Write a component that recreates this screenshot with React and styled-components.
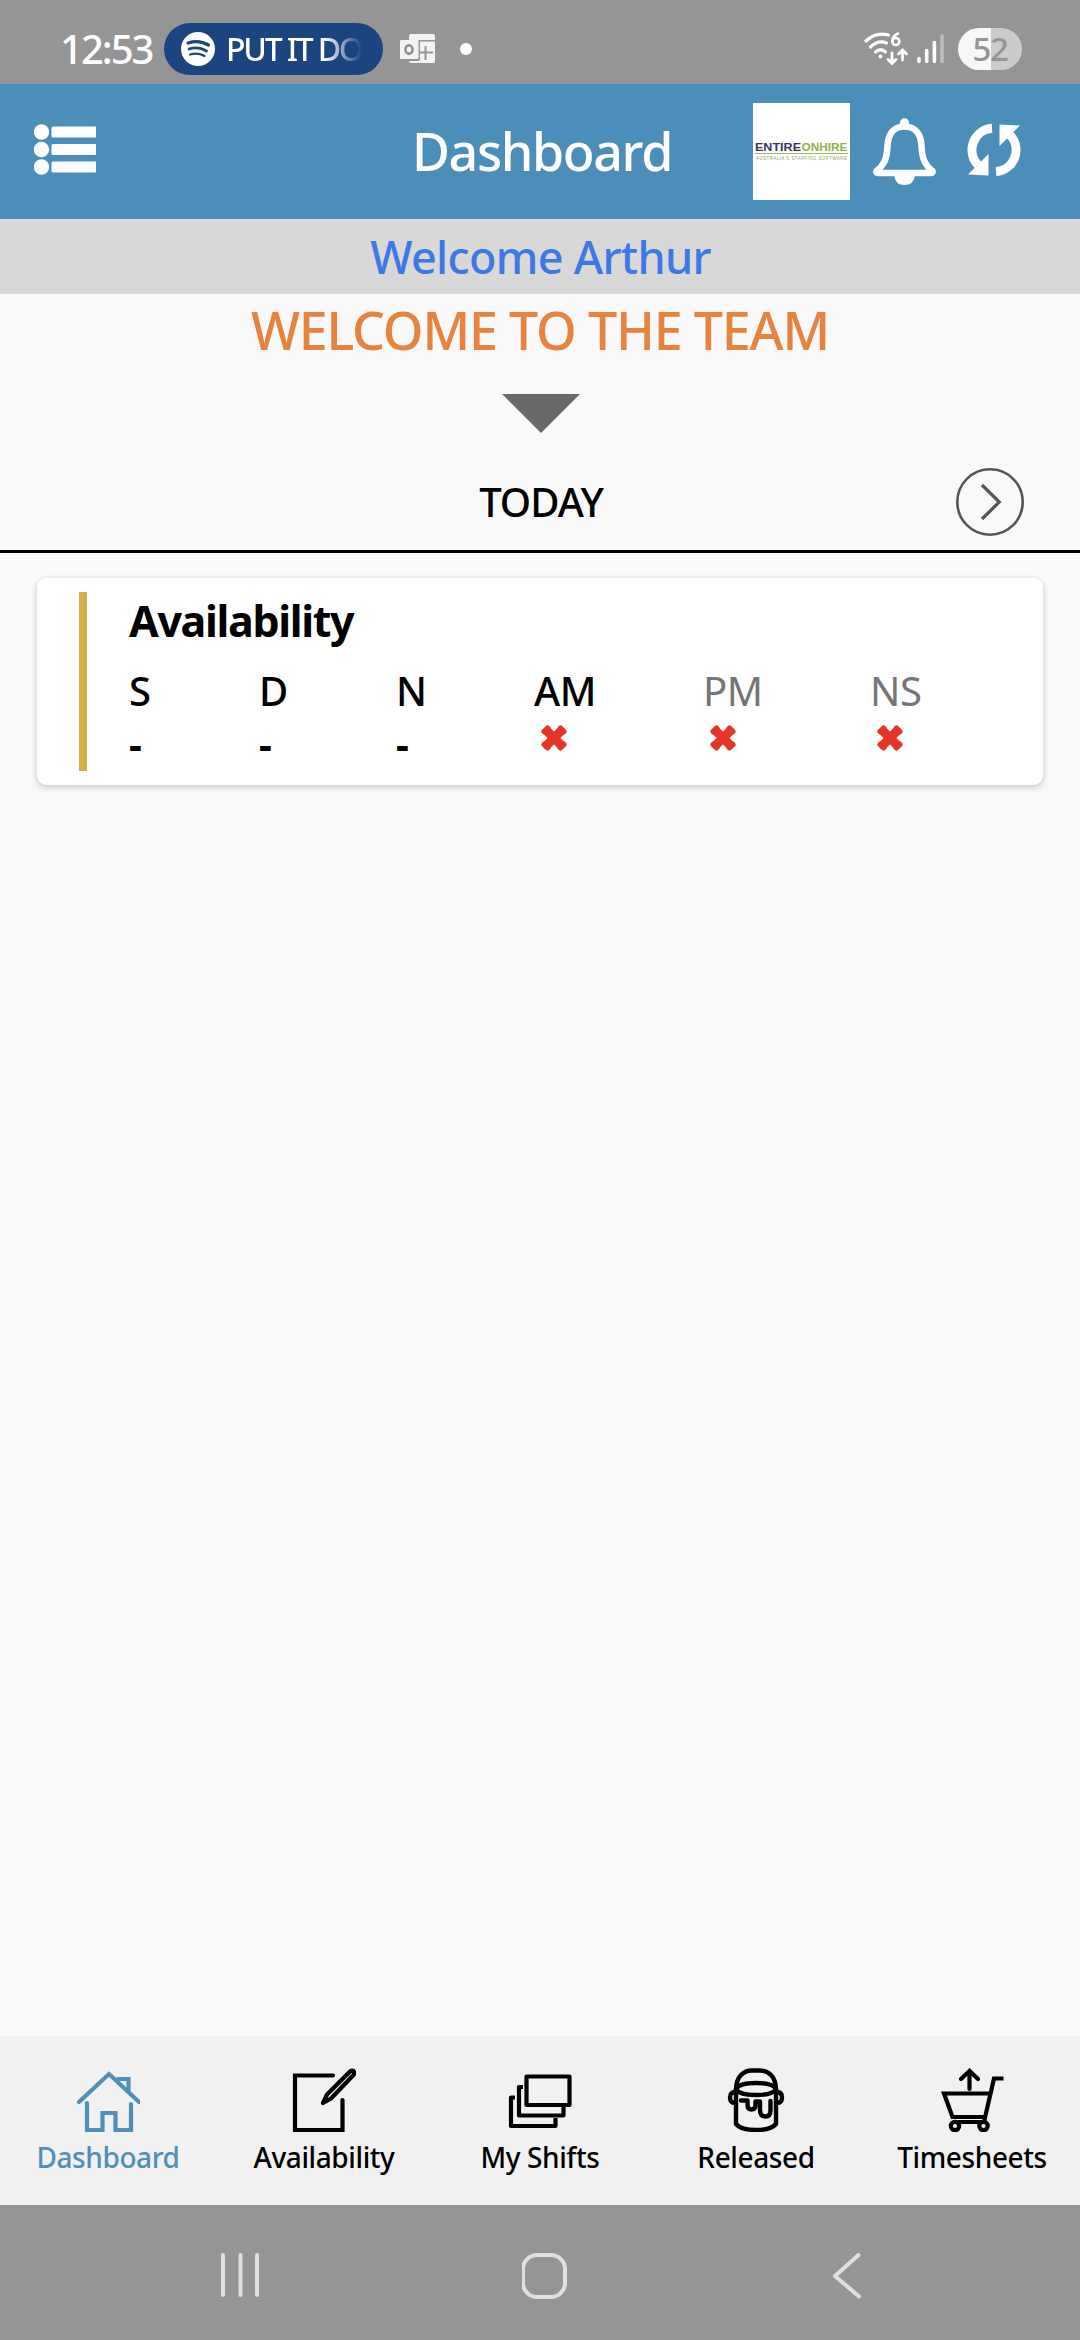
import styled, { createGlobalStyle } from 'styled-components';

const DAYS = [
  { label: 'S', width: 130 },
  { label: 'D', width: 137 },
  { label: 'N', width: 138 },
  { label: 'AM', width: 169, off: true },
  { label: 'PM', width: 167, off: true, muted: true },
  { label: 'NS', width: 80, off: true, muted: true },
];

const TABS = [
  { label: 'Dashboard', icon: HouseIcon, active: true },
  { label: 'Availability', icon: EditIcon },
  { label: 'My Shifts', icon: StackIcon },
  { label: 'Released', icon: BucketIcon },
  { label: 'Timesheets', icon: CartIcon },
];

export default function App() {
  return (
    <>
      <GlobalStyle />
      <Screen>
        <StatusBar>
          <Clock>12:53</Clock>
          <MusicPill>
            <SpotifyIcon />
            <Song>PUT IT DO</Song>
          </MusicPill>
          <OutlookIcon />
          <Dot />
          <StatusRight>
            <WifiIcon />
            <SignalIcon />
            <Battery>52</Battery>
          </StatusRight>
        </StatusBar>

        <Header>
          <MenuIcon />
          <Title>Dashboard</Title>
          <Actions>
            <LogoBox>
              <Logo />
            </LogoBox>
            <BellIcon />
            <SyncIcon />
          </Actions>
        </Header>

        <Welcome>Welcome Arthur</Welcome>
        <TeamMessage>WELCOME TO THE TEAM</TeamMessage>
        <Triangle />

        <DayBar>
          <Today>TODAY</Today>
          <NextButton>
            <svg width="68" height="68" viewBox="0 0 68 68" fill="none" stroke="#50575c">
              <circle cx="34" cy="34" r="32.7" strokeWidth="2.6" />
              <path d="M26 17 L43.3 34 L26 51" strokeWidth="3.2" />
            </svg>
          </NextButton>
        </DayBar>

        <Card>
          <Stripe />
          <CardBody>
            <CardTitle>Availability</CardTitle>
            <Days>
              {DAYS.map((day) => (
                <Day key={day.label} $width={day.width}>
                  <DayLabel $muted={day.muted}>{day.label}</DayLabel>
                  {day.off ? <CrossIcon /> : <Dash>-</Dash>}
                </Day>
              ))}
            </Days>
          </CardBody>
        </Card>

        <TabBar>
          {TABS.map(({ label, icon: Icon, active }) => (
            <Tab key={label} $active={active}>
              <Icon />
              <TabLabel>{label}</TabLabel>
            </Tab>
          ))}
        </TabBar>

        <SystemNav>
          <svg width="40" height="50" viewBox="0 0 40 50" stroke="#e0e0e0" strokeWidth="4" strokeLinecap="round">
            <path d="M4 5 V45 M21.5 5 V45 M38 5 V45" />
          </svg>
          <svg width="48" height="50" viewBox="0 0 48 50" fill="none" stroke="#e0e0e0" strokeWidth="4">
            <rect x="1" y="5" width="42" height="42" rx="14" />
          </svg>
          <svg width="32" height="50" viewBox="0 0 32 50" fill="none" stroke="#e0e0e0" strokeWidth="4" strokeLinecap="round" strokeLinejoin="round">
            <path d="M26.5 5 L3 26 L27 46.5" />
          </svg>
        </SystemNav>
      </Screen>
    </>
  );
}

function SpotifyIcon() {
  return (
    <svg width="34" height="34" viewBox="0 0 34 34" fill="none" stroke="#1b457e" strokeLinecap="round">
      <circle cx="17" cy="17" r="17" fill="#ffffff" stroke="none" />
      <path d="M7 11 Q18 7.5 27.5 13" strokeWidth="3.2" />
      <path d="M8 17 Q17.5 14 25.5 19" strokeWidth="2.7" />
      <path d="M9 22.5 Q17 20 23.5 24" strokeWidth="2.2" />
    </svg>
  );
}

function OutlookIcon() {
  return (
    <svg width="36" height="30" viewBox="0 0 36 30" fill="none">
      <path d="M11 0 H33 Q35 0 35 2 V6 H9 V2 Q9 0 11 0Z" fill="#f2f2f2" />
      <path d="M20 7.5 H35 V27 Q35 29 33 29 H11 Q9 29 9 27 H18 Q20 27 20 25Z" fill="#f2f2f2" />
      <rect x="0" y="6" width="18.5" height="19" rx="1" fill="#f2f2f2" />
      <ellipse cx="9" cy="15.5" rx="3.6" ry="4.2" stroke="#8a8a8a" strokeWidth="2.4" />
      <path d="M19 18.5 H33 M25.5 12 V26" stroke="#959595" strokeWidth="2" />
    </svg>
  );
}

function WifiIcon() {
  return (
    <svg width="44" height="34" viewBox="0 0 44 34" fill="none" stroke="#ffffff" strokeWidth="3.2" strokeLinecap="round">
      <path d="M2 9 Q12 -0.5 24.5 3" />
      <path d="M6.5 15 Q14 7.5 22.5 11" />
      <path d="M11.5 20 Q16.5 15.5 21.5 20" />
      <circle cx="16.5" cy="24.5" r="2" fill="#ffffff" stroke="none" />
      <path d="M34 1.5 Q28.5 4 28.3 9" strokeWidth="2.6" />
      <circle cx="31.8" cy="9.5" r="3.5" strokeWidth="2.6" />
      <path d="M28 21 V31 M24 27.5 L28 31.5 L32 27.5" strokeWidth="2.8" />
      <path d="M38.5 28 V18.5 M34.5 22 L38.5 18 L42.5 22" strokeWidth="2.8" />
    </svg>
  );
}

function SignalIcon() {
  return (
    <svg width="27" height="30" viewBox="0 0 27 30" strokeWidth="3.6" strokeLinecap="round" stroke="#ffffff">
      <path d="M2 24.5 V27.5 M9.7 16.5 V27.5 M17.4 8.500 V27.5" />
      <path d="M25 2 V27.5" stroke="#bdbdbd" />
    </svg>
  );
}

function MenuIcon() {
  return (
    <MenuSvg width="62" height="52" viewBox="0 0 62 52" fill="#ffffff">
      <circle cx="7.5" cy="8" r="7.7" />
      <circle cx="7.5" cy="25.5" r="7.7" />
      <circle cx="7.5" cy="43" r="7.7" />
      <path d="M19 2.5 H62 V13.5 H19 Q17.5 13.5 17.5 12 V4 Q17.5 2.5 19 2.5Z" />
      <path d="M19 20 H62 V31 H19 Q17.5 31 17.5 29.5 V21.5 Q17.5 20 19 20Z" />
      <path d="M19 37.5 H62 V48.5 H19 Q17.5 48.5 17.5 47 V39 Q17.5 37.5 19 37.5Z" />
    </MenuSvg>
  );
}

function Logo() {
  return (
    <svg width="97" height="97" viewBox="0 0 97 97" fontFamily="'Liberation Sans', sans-serif">
      <text x="2" y="47.5" fontSize="10" fontWeight="700" fill="#3b3460" textLength="46" lengthAdjust="spacingAndGlyphs">ENTIRE</text>
      <text x="48.5" y="47.5" fontSize="10" fontWeight="700" fill="#8fb14a" textLength="46" lengthAdjust="spacingAndGlyphs">ONHIRE</text>
      <path d="M2 50.5 H95" stroke="#9dba62" strokeWidth="1" />
      <text x="3" y="56.5" fontSize="4.5" fill="#8ba55a" textLength="91">AUSTRALIA'S STAFFING SOFTWARE</text>
    </svg>
  );
}

function BellIcon() {
  return (
    <svg width="63" height="67" viewBox="0 0 63 67" fill="none">
      <circle cx="31.5" cy="5" r="4.7" fill="#ffffff" />
      <path
        d="M31.5 8.5 C20 8.5 15 17 14.5 28 C14 42 10 48 3.5 53 Q3 55 5 55 H58 Q60 55 59.5 53 C53 48 49 42 48.5 28 C48 17 43 8.5 31.5 8.5Z"
        stroke="#ffffff"
        strokeWidth="6.5"
        strokeLinejoin="round"
      />
      <path d="M21 57 H42 Q41 67 31.5 67 Q22 67 21 57Z" fill="#ffffff" />
    </svg>
  );
}

function SyncIcon() {
  return (
    <SyncSvg width="56" height="56" viewBox="0 0 56 56" fill="none">
      <path d="M26 6.3 A21.5 21.7 0 0 0 12 43" stroke="#ffffff" strokeWidth="9" />
      <path d="M2 52.5 L22.5 53.5 V32Z" fill="#ffffff" />
      <path d="M30 49.7 A21.5 21.7 0 0 0 44 13" stroke="#ffffff" strokeWidth="9" />
      <path d="M54 3.5 L33.5 2.5 V24Z" fill="#ffffff" />
    </SyncSvg>
  );
}

function CrossIcon() {
  return (
    <Cross width="28" height="28" viewBox="0 0 28 28" stroke="#e63528">
      <path d="M6 6 L22 22 M22 6 L6 22" strokeWidth="9" />
      <path d="M4.5 7.5 L7.5 4.5 M20.5 4.5 L23.5 7.5 M23.5 20.5 L20.5 23.5 M7.5 23.5 L4.5 20.5" strokeWidth="6" strokeLinecap="round" />
    </Cross>
  );
}

function HouseIcon() {
  return (
    <svg width="64" height="66" viewBox="0 0 64 66" fill="none" stroke="currentColor" strokeWidth="4.2" strokeLinecap="round">
      <path d="M3 36 L33 8 L63 36" />
      <path d="M42 13 H52.5 V25" />
      <path d="M11 37 V64 H26.5 V47 H39.500 V64 H55 V38" />
    </svg>
  );
}

function EditIcon() {
  return (
    <svg width="64" height="66" viewBox="0 0 64 66" fill="none" stroke="currentColor" strokeWidth="4.2" strokeLinecap="round">
      <path d="M41 9.500 H3 V64 H50.500 V34" />
      <path d="M31 37 L35 28.500 L58 5.500 Q60 4 61.500 5 Q63 7 61.500 9 L39 32.500Z" strokeWidth="4.2" strokeLinejoin="round" />
    </svg>
  );
}

function StackIcon() {
  return (
    <svg width="64" height="66" viewBox="0 0 64 66" fill="none" stroke="currentColor" strokeWidth="4.2" strokeLinejoin="round">
      <rect x="18.500" y="10.500" width="43" height="28.500" />
      <path d="M15 21 H11 V49.500 H55.500 V41" />
      <path d="M7 31.500 H3 V60 H47.500 V52" />
    </svg>
  );
}

function BucketIcon() {
  return (
    <svg width="64" height="66" viewBox="0 0 64 66" fill="none" stroke="currentColor" strokeWidth="4.4" strokeLinecap="round" strokeLinejoin="round">
      <path d="M12 24 C12 10 20 4.500 28 4.500 H36 C44 4.500 52 10 52 24" />
      <path d="M12 23 Q15 17 32 17 Q49 17 52 23 Q49 29 32 29 Q15 29 12 23Z" />
      <path d="M12 23 V58 Q17 64 32 64 Q47 64 52 58 V23" />
      <path d="M11 26 Q6 26 6 31.500 Q6 37 11 37 M53 26 Q58 26 58 31.500 Q58 37 53 37" />
      <path d="M17 34.500 H23.500 V39 Q23.500 43.500 27.500 43.500 Q31.500 43.500 31.500 39 V35.500 H36 V44 Q36 50.500 41.500 50.500 Q46.500 50.500 46.500 44 V35" />
    </svg>
  );
}

function CartIcon() {
  return (
    <svg width="64" height="66" viewBox="0 0 64 66" fill="none" stroke="currentColor" strokeWidth="4.2">
      <path d="M63.500 12.500 H54 L44 56 H14" />
      <path d="M49 27.500 H4 L12.500 51 H44" />
      <circle cx="15" cy="60" r="4.200" />
      <circle cx="43.500" cy="60" r="4.200" />
      <path d="M29.500 23 V5 M21 13 L29.500 5 L38 13" strokeLinecap="round" />
    </svg>
  );
}

const GlobalStyle = createGlobalStyle`
  * {
    box-sizing: border-box;
  }

  body {
    margin: 0;
    background-color: #f9f9f9;
    font-family: 'Noto Sans', 'Open Sans', sans-serif;
  }

  svg {
    display: block;
    flex-shrink: 0;
  }
`;

const Screen = styled.div`
  width: 1080px;
  height: 2340px;
  display: flex;
  flex-direction: column;
  background-color: #f9f9f9;
  overflow: hidden;
`;

const StatusBar = styled.div`
  height: 84px;
  padding: 14px 58px 0 60px;
  display: flex;
  align-items: center;
  flex-shrink: 0;
  background-color: #959595;
`;

const Clock = styled.span`
  width: 104px;
  color: #ffffff;
  font-size: 40px;
  font-weight: 500;
  line-height: 40px;
  letter-spacing: -2px;
  padding-bottom: 1px;
`;

const MusicPill = styled.div`
  width: 219px;
  height: 52px;
  padding: 0 0 0 17px;
  display: flex;
  align-items: center;
  gap: 11px;
  margin-right: 17px;
  border-radius: 26px;
  background-color: #1b457e;
`;

const Song = styled.span`
  font-size: 32px;
  font-weight: 500;
  line-height: 44px;
  letter-spacing: -2.2px;
  white-space: nowrap;
  color: transparent;
  background: linear-gradient(90deg, #ffffff 72%, #1b457e 100%);
  background-clip: text;
`;

const Dot = styled.span`
  width: 12px;
  height: 12px;
  margin-left: 24px;
  border-radius: 50%;
  background-color: #ffffff;
`;

const StatusRight = styled.div`
  display: flex;
  align-items: center;
  margin-left: auto;
  gap: 9px;
`;

const Battery = styled.span`
  width: 64px;
  height: 42px;
  margin-left: 5px;
  border-radius: 21px;
  background: linear-gradient(90deg, #f7f7f7 52%, #cbcbcb 52%);
  color: #959595;
  font-size: 33px;
  font-weight: 500;
  line-height: 41px;
  letter-spacing: -1.5px;
  text-align: center;
`;

const Header = styled.header`
  height: 135px;
  padding: 0 58px 0 34px;
  display: grid;
  grid-template-columns: 368px 280px 1fr;
  align-items: center;
  flex-shrink: 0;
  background-color: #4b8eb9;
`;

const MenuSvg = styled.svg`
  margin-bottom: 3px;
`;

const Title = styled.h1`
  margin: 0 0 2px;
  color: #ffffff;
  font-size: 52px;
  font-weight: 500;
  line-height: 70px;
  letter-spacing: -1.4px;
  text-align: center;
`;

const Actions = styled.div`
  display: flex;
  align-items: center;
  justify-content: flex-end;
`;

const LogoBox = styled.div`
  width: 97px;
  height: 97px;
  margin-right: 23px;
  background-color: #ffffff;

  & + svg {
    margin-right: 30px;
  }
`;

const SyncSvg = styled.svg`
  margin-bottom: 3px;
`;

const Welcome = styled.div`
  height: 75px;
  padding-left: 1px;
  flex-shrink: 0;
  background-color: #d8d8d8;
  color: #3d79e6;
  font-size: 45px;
  font-weight: 500;
  line-height: 76px;
  letter-spacing: -0.7px;
  text-align: center;
`;

const TeamMessage = styled.div`
  height: 100px;
  flex-shrink: 0;
  color: #e6833f;
  font-size: 52px;
  font-weight: 500;
  line-height: 71px;
  letter-spacing: -1.2px;
  text-align: center;
`;

const Triangle = styled.div`
  width: 0;
  height: 0;
  margin-left: 502px;
  border-left: 39px solid transparent;
  border-right: 39px solid transparent;
  border-top: 39px solid #696969;
  flex-shrink: 0;
`;

const DayBar = styled.div`
  height: 120px;
  padding: 35px 56px 0 126px;
  display: flex;
  align-items: flex-start;
  flex-shrink: 0;
  border-bottom: 3px solid #000000;
`;

const Today = styled.div`
  flex: 1;
  color: #000000;
  font-size: 40px;
  font-weight: 500;
  line-height: 68px;
  letter-spacing: -1px;
  text-align: center;
`;

const NextButton = styled.button`
  padding: 0;
  border: none;
  background: none;
`;

const Card = styled.section`
  height: 207px;
  margin: 25px 37px 0;
  padding: 14px 42px;
  display: flex;
  gap: 42px;
  flex-shrink: 0;
  border-radius: 9px;
  background-color: #ffffff;
  box-shadow: 0 2px 6px rgba(0, 0, 0, 0.22);
`;

const Stripe = styled.div`
  width: 8px;
  height: 179px;
  background-color: #d3b146;
`;

const CardBody = styled.div`
  flex: 1;
`;

const CardTitle = styled.h2`
  margin: 0;
  color: #000000;
  font-size: 43px;
  font-weight: 700;
  line-height: 58px;
  letter-spacing: -1.35px;
`;

const Days = styled.div`
  display: flex;
  margin-top: 10px;
`;

const Day = styled.div`
  width: ${(props) => props.$width}px;
`;

const DayLabel = styled.div`
  color: ${(props) => (props.$muted ? '#757575' : '#000000')};
  font-size: 40px;
  font-weight: ${(props) => (props.$muted ? 400 : 500)};
  line-height: 62px;
  letter-spacing: -0.5px;
`;

const Dash = styled.div`
  color: #000000;
  font-size: 40px;
  font-weight: 700;
  line-height: 44px;
`;

const Cross = styled.svg`
  margin: 2px 0 0 6px;
`;

const TabBar = styled.nav`
  height: 169px;
  margin-top: auto;
  display: grid;
  grid-template-columns: repeat(5, 1fr);
  flex-shrink: 0;
  background-color: #f1f1f1;
`;

const Tab = styled.div`
  padding-top: 30px;
  display: flex;
  flex-direction: column;
  align-items: center;
  color: ${(props) => (props.$active ? '#4f8fb8' : '#000000')};
`;

const TabLabel = styled.span`
  font-size: 28px;
  font-weight: 500;
  line-height: 40px;
  letter-spacing: -0.4px;
  margin-top: 5px;
  white-space: nowrap;
`;

const SystemNav = styled.div`
  height: 135px;
  padding: 5px 216px 0 219px;
  display: flex;
  align-items: center;
  justify-content: space-between;
  flex-shrink: 0;
  background-color: #959595;
`;
